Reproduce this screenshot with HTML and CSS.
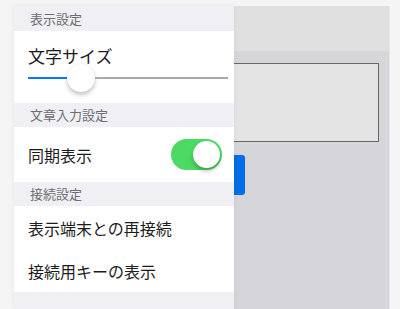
FILE: index.html
```html
<!DOCTYPE html>
<html lang="ja">
<head>
<meta charset="utf-8">
<link rel="stylesheet" href="styles.css">
</head>
<body>
<div class="frame">
  <div class="topbar"></div>
  <div class="content">
    <div class="textbox"></div>
    <div class="button"></div>
  </div>
  <aside class="panel">
    <div class="section-header">表示設定</div>
    <div class="row slider-row">
      <div class="label">文字サイズ</div>
      <div class="slider">
        <div class="track-fill" style="width:39px"></div>
        <div class="thumb"></div>
        <div class="track-rest"></div>
      </div>
    </div>
    <div class="section-header">文章入力設定</div>
    <div class="row toggle-row">
      <div class="label">同期表示</div>
      <div class="switch on"><div class="knob"></div></div>
    </div>
    <div class="section-header">接続設定</div>
    <div class="row link-row"><div class="label">表示端末との再接続</div></div>
    <div class="row link-row"><div class="label">接続用キーの表示</div></div>
  </aside>
</div>
</body>
</html>
```
FILE: styles.css
```css
html, body {
  margin: 0;
  padding: 0;
  background: #f5f5f5;
  font-family: "Noto Sans CJK JP", "Noto Sans", sans-serif;
  overflow: hidden;
}
.frame {
  position: relative;
  margin: 6px 0 0 14px;
  width: 375px;
  height: 303px;
  background: #d6d5da;
  border-right: 1px solid #e8e8e8;
  display: flex;
  flex-direction: column;
}
.topbar {
  height: 45px;
  background: #e0e0e0;
  flex: none;
}
.content {
  padding: 12px 0 0 8px;
  display: flex;
  flex-direction: column;
  gap: 13px;
}
.textbox {
  width: 355px;
  height: 77px;
  background: #e4e4e4;
  border: 1px solid #666;
}
.button {
  width: 223px;
  height: 40px;
  background: #006ee6;
  border-radius: 3px;
}
.panel {
  position: absolute;
  left: 0;
  top: 0;
  bottom: 0;
  width: 220px;
  background: #efeff4;
  box-shadow: 0 0 6px rgba(0,0,0,0.06);
  display: flex;
  flex-direction: column;
}
.section-header {
  height: 24px;
  line-height: 24px;
  padding-left: 16px;
  font-size: 13px;
  color: #6d6d72;
}
.section-header:first-child {
  height: 25px;
  line-height: 25px;
}
.row {
  background: #fff;
  padding: 0 12px 0 14px;
  color: #1c1c1c;
  font-size: 16px;
}
.label {
  line-height: 20px;
}
.slider-row {
  height: 72px;
  box-sizing: border-box;
  padding-top: 15px;
  display: flex;
  flex-direction: column;
}
.slider-row .label {
  font-size: 17px;
}
.slider {
  margin-top: 1px;
  height: 22px;
  width: 200px;
  display: flex;
  align-items: center;
}
.track-fill {
  height: 2px;
  background: #007aff;
}
.track-rest {
  flex: 1;
  height: 2px;
  background: #a9a9b0;
}
.thumb {
  width: 28px;
  height: 28px;
  border-radius: 50%;
  background: #fff;
  box-shadow: 0 3px 4px rgba(0,0,0,0.22), 0 0 1px rgba(0,0,0,0.15);
  flex: none;
}
.toggle-row {
  height: 55px;
  display: flex;
  align-items: center;
  justify-content: space-between;
}
.switch {
  width: 51px;
  height: 31px;
  border-radius: 16px;
  background: #4cd964;
  display: flex;
  align-items: center;
  justify-content: flex-end;
  padding: 0 2px;
  box-sizing: border-box;
}
.knob {
  width: 27px;
  height: 27px;
  border-radius: 50%;
  background: #fff;
  box-shadow: 0 3px 4px rgba(0,0,0,0.25);
}
.link-row {
  height: 43px;
  display: flex;
  align-items: center;
}
```
